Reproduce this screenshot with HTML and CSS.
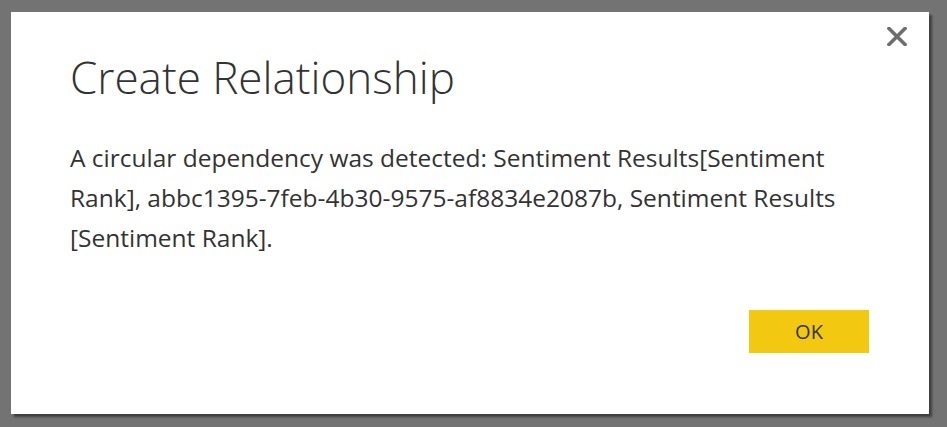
FILE: index.html
```html
<!DOCTYPE html>
<html>
<head>
<meta charset="utf-8">
<link rel="stylesheet" href="styles.css">
</head>
<body>
<div class="dialog">
  <button class="close" aria-label="Close">
    <svg width="20" height="19" viewBox="0 0 20 19"><path d="M2 1.5 L18 17.5 M18 1.5 L2 17.5" stroke="#6e6e6e" stroke-width="3.6" stroke-linecap="square" fill="none"/></svg>
  </button>
  <h1 class="title">Create Relationship</h1>
  <p class="message">A circular dependency was detected: Sentiment Results[Sentiment Rank], abbc1395-7feb-4b30-9575-af8834e2087b, Sentiment Results [Sentiment Rank].</p>
  <div class="footer">
    <button class="ok">OK</button>
  </div>
</div>
</body>
</html>
```
FILE: styles.css
```css
html, body {
  margin: 0;
  padding: 0;
  background: #737373;
  width: 947px;
  height: 427px;
  overflow: hidden;
}
.dialog {
  position: relative;
  box-sizing: border-box;
  margin: 12px 0 0 11px;
  width: 918px;
  height: 402px;
  background: #ffffff;
  box-shadow: 3px 3px 2px rgba(30, 30, 30, 0.6);
  padding: 37px 60px 61px 59px;
  display: flex;
  flex-direction: column;
  font-family: "Open Sans", "Noto Sans", sans-serif;
  color: #333333;
}
.close {
  position: absolute;
  top: 15px;
  right: 22px;
  width: 20px;
  height: 19px;
  padding: 0;
  border: 0;
  background: transparent;
  display: flex;
}
.title {
  margin: 0;
  font-size: 44px;
  line-height: 56px;
  font-weight: 300;
  color: #333333;
}
.message {
  margin: 33px 10px 0 0;
  font-size: 24.5px;
  line-height: 40px;
  font-weight: 400;
  color: #333333;
}
.footer {
  margin-top: auto;
  display: flex;
  justify-content: flex-end;
}
.ok {
  width: 120px;
  height: 43px;
  border: 0;
  background: #f2c811;
  font-family: "Open Sans", "Noto Sans", sans-serif;
  font-size: 20px;
  color: #333333;
  padding: 0;
}
```
